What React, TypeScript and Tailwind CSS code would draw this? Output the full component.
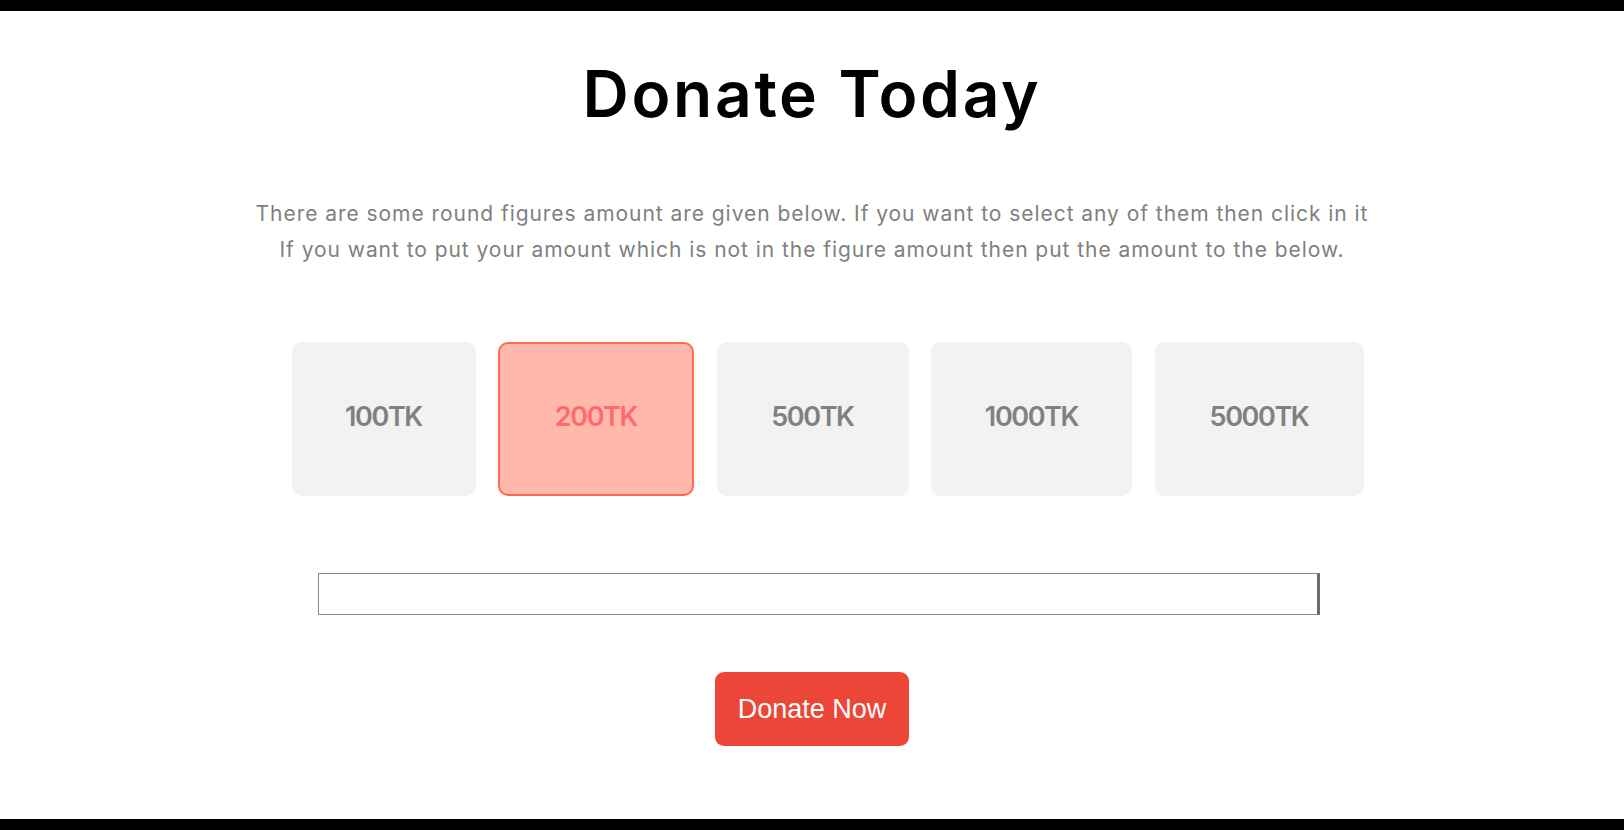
import React from "react";

const amounts = [
  { label: "100TK", w: "w-[184px]", selected: false },
  { label: "200TK", w: "w-[196px]", selected: true },
  { label: "500TK", w: "w-[192px]", selected: false },
  { label: "1000TK", w: "w-[201px]", selected: false },
  { label: "5000TK", w: "w-[209px]", selected: false },
];

export default function App() {
  return (
    <div className="min-h-[830px] h-[830px] flex flex-col bg-white" style={{ fontFamily: "Inter, 'Noto Sans', sans-serif" }}>
      <div className="h-[11px] bg-black shrink-0" />
      <main className="flex-1 flex flex-col items-center">
        <h1 className="mt-[51px] text-[64px] leading-[64px] font-semibold text-black tracking-[2.7px]">
          Donate Today
        </h1>
        <p className="mt-[70px] text-[21px] leading-[36px] text-[#808080] text-center tracking-[0.95px]">
          There are some round figures amount are given below. If you want to select any of them then click in it
          <br />
          If you want to put your amount which is not in the figure amount then put the amount to the below.
        </p>
        <div className="mt-[74px] flex gap-[22.5px] pl-[31px]">
          {amounts.map((a) => (
            <button
              key={a.label}
              className={
                a.selected
                  ? `${a.w} h-[154px] rounded-[10px] bg-[#feb9ac] border-2 border-[#ff6a4f] flex items-center justify-center pb-[3px] text-[27px] tracking-[-1.4px] font-semibold text-[#ff6b6d]`
                  : `${a.w} h-[154px] rounded-[10px] bg-[#f2f2f2] flex items-center justify-center pb-[3px] text-[27px] tracking-[-1.4px] font-semibold text-[#808080]`
              }
            >
              {a.label}
            </button>
          ))}
        </div>
        <div className="mt-[77px] flex justify-center pl-[13px]">
          <input
            type="text"
            className="w-[1002px] h-[42px] border border-[#8a8a8a] border-r-[3px] border-r-[#6e6e6e] bg-white outline-none"
          />
        </div>
        <button
          className="mt-[57px] w-[194px] h-[74px] rounded-[9px] bg-[#eb4638] text-white text-[27px]"
          style={{ fontFamily: "'Liberation Sans', Arial, sans-serif" }}
        >
          Donate Now
        </button>
      </main>
      <div className="h-[11px] bg-black shrink-0" />
    </div>
  );
}
